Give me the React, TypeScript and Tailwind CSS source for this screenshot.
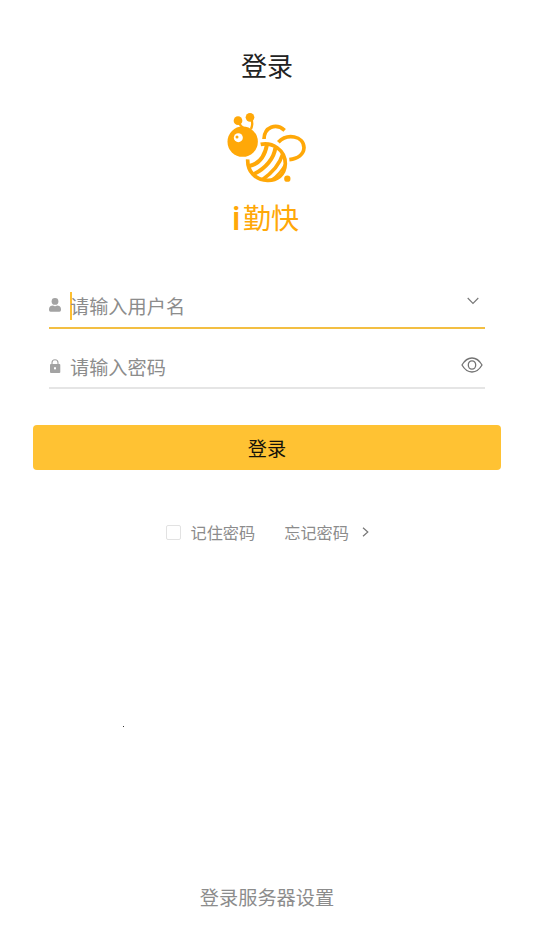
import React from "react";

function Bee() {
  return (
    <svg viewBox="0 0 300 255" className="h-[85px] w-[100px]" fill="none" stroke="#ffa808">
      <circle cx="77" cy="110" r="45.5" fill="#ffa808" stroke="none" />
      <circle cx="64" cy="98" r="13.5" fill="#fff" stroke="none" />
      <circle cx="60" cy="96" r="4.5" fill="#ffa808" stroke="none" />
      <circle cx="63" cy="47" r="13" fill="#ffa808" stroke="none" />
      <circle cx="99" cy="37" r="13" fill="#ffa808" stroke="none" />
      <path d="M66 52Q69 62 79 69M103 43Q109 56 102 72" strokeWidth="7" />
      <path d="M141 102C142 66 177 53 203 76" strokeWidth="11" />
      <path d="M184 112C210 84 260 92 261 128C260 148 243 161 217 164" strokeWidth="11" />
      <path d="M131 118C166 111 205 134 205 176C204 211 179 227 151 226C115 225 91 200 92 163" strokeWidth="11" />
      <path d="M150 119C144 150 128 177 97 183" strokeWidth="12" />
      <path d="M175 129C171 160 146 190 111 207" strokeWidth="12" />
      <path d="M197 148C187 181 165 204 136 224" strokeWidth="11" />
      <path d="M205 177C194 198 181 212 164 224" strokeWidth="7" />
      <circle cx="211" cy="221" r="9.5" fill="#ffa808" stroke="none" />
    </svg>
  );
}

function UserIcon() {
  return (
    <svg viewBox="0 0 12 14" className="mb-[2px] h-[14px] w-3 shrink-0" fill="#a3a3a3">
      <circle cx="6" cy="3.4" r="3.4" />
      <path d="M0 12V11C0 8.5 2 7.5 4 7.5Q6 8.8 8 7.5C10 7.5 12 8.5 12 11V12Q12 13.8 10.5 13.8H1.5Q0 13.8 0 12Z" />
    </svg>
  );
}

function LockIcon() {
  return (
    <svg viewBox="0 0 12 14" className="h-[14px] w-3 shrink-0" fill="none">
      <path d="M3 6V3.7Q3 .7 6 .7T9 3.7V6" stroke="#a3a3a3" strokeWidth="1.1" />
      <rect x="1" y="5" width="10.3" height="9" rx="1" fill="#a3a3a3" />
      <path d="M5 8.3H7V9.5L6.5 10.5H5.5L5 9.5Z" fill="#fff" />
    </svg>
  );
}

export default function App() {
  return (
    <main className="flex h-[950px] w-[534px] flex-col items-center bg-white font-['Noto_Sans_CJK_SC',sans-serif] text-[#8c8c8c]">
      <h1 className="mt-[45px] h-10 text-[26px] leading-10 text-[#222]">登录</h1>
      <div className="mt-5"><Bee /></div>
      <div className="flex h-[55px] w-[66px] items-center pb-px text-[28px] leading-[40px] text-[#ffa808]">
        <span className="-ml-[2px] w-[11px] shrink-0 pt-[3px] font-['Roboto',sans-serif] text-[33px] font-medium">i</span>
        <span className="shrink-0 pb-px">勤快</span>
      </div>

      <form className="mt-[40px] flex w-[436px] flex-col">
        <div className="flex h-[44px] items-center border-b-2 border-[#f3bf43]">
          <UserIcon />
          <span className="ml-[9px] h-7 w-[2px] bg-[#fdbf31]" />
          <span className="-ml-[2px] text-[19.2px] leading-7">请输入用户名</span>
          <svg viewBox="0 0 12 8" className="mb-[10px] ml-auto mr-[6px] h-2 w-3" fill="none" stroke="#777" strokeWidth="1.1">
            <path d="M.7 1L6 6.5L11.3 1" />
          </svg>
        </div>
        <div className="mt-[16px] flex h-[44px] items-center border-b-2 border-[#e5e5e5]">
          <LockIcon />
          <span className="ml-[9px] pt-px text-[19.2px] leading-7">请输入密码</span>
          <svg viewBox="0 0 22 16" className="mb-[2px] ml-auto mr-[2px] h-4 w-[22px]" fill="none" stroke="#737373" strokeWidth="1.3">
            <path d="M1 8Q5 1 11 1T21 8Q17 15 11 15T1 8Z" />
            <ellipse cx="11" cy="8" rx="3.7" ry="4.2" />
          </svg>
        </div>
      </form>

      <button className="mt-[36px] h-[45px] w-[468px] rounded bg-[#ffc233] pt-px text-[19.2px] text-[#15120a]">登录</button>

      <div className="mt-[50px] flex h-6 w-[203px] items-center text-[16.2px] leading-6">
        <span className="h-[15px] w-[15px] shrink-0 rounded-[2px] border border-[#e2e2e2]" />
        <span className="ml-[10px] shrink-0">记住密码</span>
        <span className="ml-[29px] shrink-0">忘记密码</span>
        <svg viewBox="0 0 7 10" className="ml-auto h-[10px] w-[7px]" fill="none" stroke="#777" strokeWidth="1.2">
          <path d="M1 .8L5.8 5L1 9.2" />
        </svg>
      </div>
      <span className="ml-[123px] mt-[182px] h-px w-px self-start bg-[#333]" />
      <footer className="mb-[39px] mt-auto text-[19.2px] leading-7">登录服务器设置</footer>
    </main>
  );
}
